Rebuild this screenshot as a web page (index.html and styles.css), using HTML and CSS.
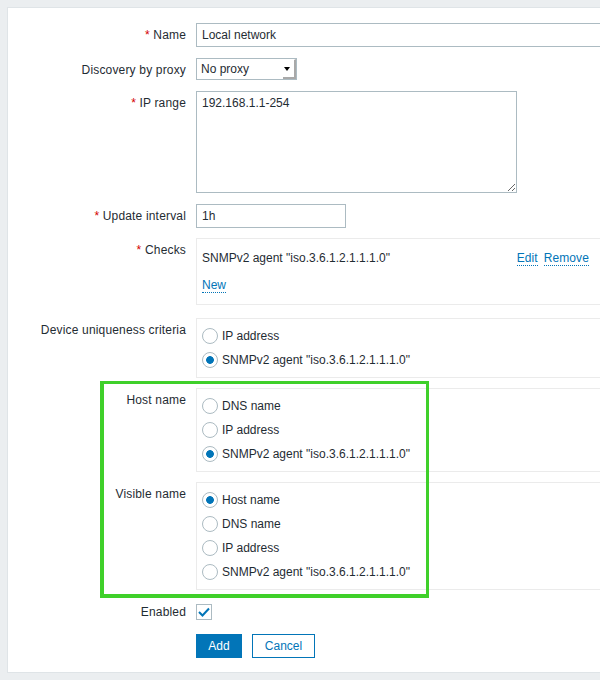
FILE: index.html
```html
<!DOCTYPE html>
<html>
<head>
<meta charset="utf-8">
<link rel="stylesheet" href="styles.css">
</head>
<body>
<div class="panel">
  <div class="form">
    <div class="row">
      <div class="label"><span class="req">*</span> Name</div>
      <div class="field"><div class="input wide">Local network</div></div>
    </div>
    <div class="row gap11">
      <div class="label">Discovery by proxy</div>
      <div class="field"><div class="select">No proxy<span class="select-btn"><span class="tri"></span></span></div></div>
    </div>
    <div class="row gap11">
      <div class="label"><span class="req">*</span> IP range</div>
      <div class="field"><textarea class="textarea">192.168.1.1-254</textarea></div>
    </div>
    <div class="row gap11">
      <div class="label"><span class="req">*</span> Update interval</div>
      <div class="field"><div class="input short">1h</div></div>
    </div>
    <div class="row gap10">
      <div class="label"><span class="req">*</span> Checks</div>
      <div class="field">
        <div class="box checks">
          <div class="check-row">
            <span>SNMPv2 agent "iso.3.6.1.2.1.1.1.0"</span>
            <span class="actions"><a class="link">Edit</a><a class="link">Remove</a></span>
          </div>
          <div><a class="link">New</a></div>
        </div>
      </div>
    </div>
    <div class="row gap13">
      <div class="label">Device uniqueness criteria</div>
      <div class="field">
        <div class="box radios">
          <label class="radio"><span class="dot"></span>IP address</label>
          <label class="radio"><span class="dot on"></span>SNMPv2 agent "iso.3.6.1.2.1.1.1.0"</label>
        </div>
      </div>
    </div>
    <div class="row gap10">
      <div class="label">Host name</div>
      <div class="field">
        <div class="box radios">
          <label class="radio"><span class="dot"></span>DNS name</label>
          <label class="radio"><span class="dot"></span>IP address</label>
          <label class="radio"><span class="dot on"></span>SNMPv2 agent "iso.3.6.1.2.1.1.1.0"</label>
        </div>
      </div>
    </div>
    <div class="row gap10">
      <div class="label">Visible name</div>
      <div class="field">
        <div class="box radios">
          <label class="radio"><span class="dot on"></span>Host name</label>
          <label class="radio"><span class="dot"></span>DNS name</label>
          <label class="radio"><span class="dot"></span>IP address</label>
          <label class="radio"><span class="dot"></span>SNMPv2 agent "iso.3.6.1.2.1.1.1.0"</label>
        </div>
      </div>
    </div>
    <div class="row gap14">
      <div class="label label-check">Enabled</div>
      <div class="field">
        <span class="checkbox"><svg width="14" height="14" viewBox="0 0 14 14"><polyline points="2,7 5.5,10.5 12,3.5" fill="none" stroke="#0275b8" stroke-width="2"/></svg></span>
      </div>
    </div>
    <div class="row gap14b">
      <div class="label"></div>
      <div class="field buttons">
        <span class="btn primary">Add</span>
        <span class="btn secondary">Cancel</span>
      </div>
    </div>
  </div>
  <div class="highlight"></div>
</div>
</body>
</html>
```
FILE: styles.css
```css
html, body {
  margin: 0;
  padding: 0;
}
body {
  background: #ebeef0;
  font-family: "Liberation Sans", Arial, sans-serif;
  font-size: 12px;
  line-height: 14px;
  color: #1f2c33;
  overflow: hidden;
  width: 600px;
  height: 680px;
}
.panel {
  position: relative;
  margin: 7px 0 0 7px;
  width: 700px;
  background: #fff;
  border: 1px solid #dfe4e7;
  padding: 15px 0 14px 0;
}
.form {
  display: flex;
  flex-direction: column;
}
.row {
  display: grid;
  grid-template-columns: 178px 1fr;
  column-gap: 10px;
}
.gap10 { margin-top: 10px; }
.gap11 { margin-top: 11px; }
.gap13 { margin-top: 13px; }
.gap14 { margin-top: 14px; }
.gap14b { margin-top: 14px; }
.label {
  text-align: right;
  padding-top: 5px;
  white-space: nowrap;
  letter-spacing: 0.17px;
}
.label-check {
  padding-top: 1px;
}
.req {
  color: #d40000;
}
.field {
  display: flex;
  align-items: flex-start;
}
.input {
  box-sizing: border-box;
  height: 24px;
  border: 1px solid #acbbc2;
  padding: 4px 5px;
  background: #fff;
}
.wide { width: 420px; }
.short { width: 150px; }
.select {
  box-sizing: border-box;
  position: relative;
  width: 101px;
  height: 22px;
  border: 1px solid #acbbc2;
  padding: 3px 4px;
}
.select-btn {
  position: absolute;
  right: 0;
  top: 0;
  box-sizing: border-box;
  width: 13px;
  height: 20px;
  border-right: 2px solid #a9a9a9;
  border-bottom: 2px solid #a9a9a9;
  border-top: 1px solid #fff;
  display: flex;
  align-items: center;
  justify-content: center;
}
.tri {
  width: 0;
  height: 0;
  border-left: 3px solid transparent;
  border-right: 3px solid transparent;
  border-top: 4px solid #000;
  margin-top: 1px;
  margin-left: -3px;
}
.textarea {
  box-sizing: border-box;
  width: 321px;
  height: 102px;
  margin: 0;
  border: 1px solid #acbbc2;
  padding: 4px 5px;
  font-family: "Liberation Sans", Arial, sans-serif;
  font-size: 12px;
  line-height: 14px;
  color: #1f2c33;
  resize: both;
  outline: none;
}
.box {
  box-sizing: border-box;
  width: 420px;
  border: 1px solid #ebebeb;
}
.checks {
  padding: 12px 0 12px 5px;
  display: flex;
  flex-direction: column;
  gap: 12px;
}
.check-row {
  width: 387px;
  display: flex;
  justify-content: space-between;
}
.actions {
  display: flex;
  gap: 6px;
  letter-spacing: 0.1px;
}
.link {
  color: #0275b8;
  text-decoration: none;
  border-bottom: 1px dotted #0275b8;
}
.radios {
  padding: 5px 5px;
  display: flex;
  flex-direction: column;
}
.radio {
  height: 24px;
  display: flex;
  align-items: center;
  gap: 4px;
}
.dot {
  box-sizing: border-box;
  width: 16px;
  height: 16px;
  border: 1px solid #acbbc2;
  border-radius: 50%;
  background: #fff;
  flex: none;
}
.dot.on {
  background: radial-gradient(circle, #0275b8 0 3.5px, #fff 4.2px);
}
.checkbox {
  box-sizing: border-box;
  width: 16px;
  height: 16px;
  border: 1px solid #acbbc2;
  display: flex;
  align-items: center;
  justify-content: center;
}
.buttons {
  gap: 10px;
}
.btn {
  box-sizing: border-box;
  height: 24px;
  padding: 0 11px;
  display: inline-flex;
  align-items: center;
  border: 1px solid #0275b8;
}
.primary {
  width: 46px;
  justify-content: center;
  background: #0275b8;
  color: #fff;
}
.secondary {
  width: 63px;
  justify-content: center;
  background: #fff;
  color: #0275b8;
}
.highlight {
  position: absolute;
  left: 92px;
  top: 373px;
  width: 329px;
  height: 217px;
  box-sizing: border-box;
  border-style: solid;
  border-color: #3fd02a;
  border-width: 3px 3px 4px 4px;
}
```
